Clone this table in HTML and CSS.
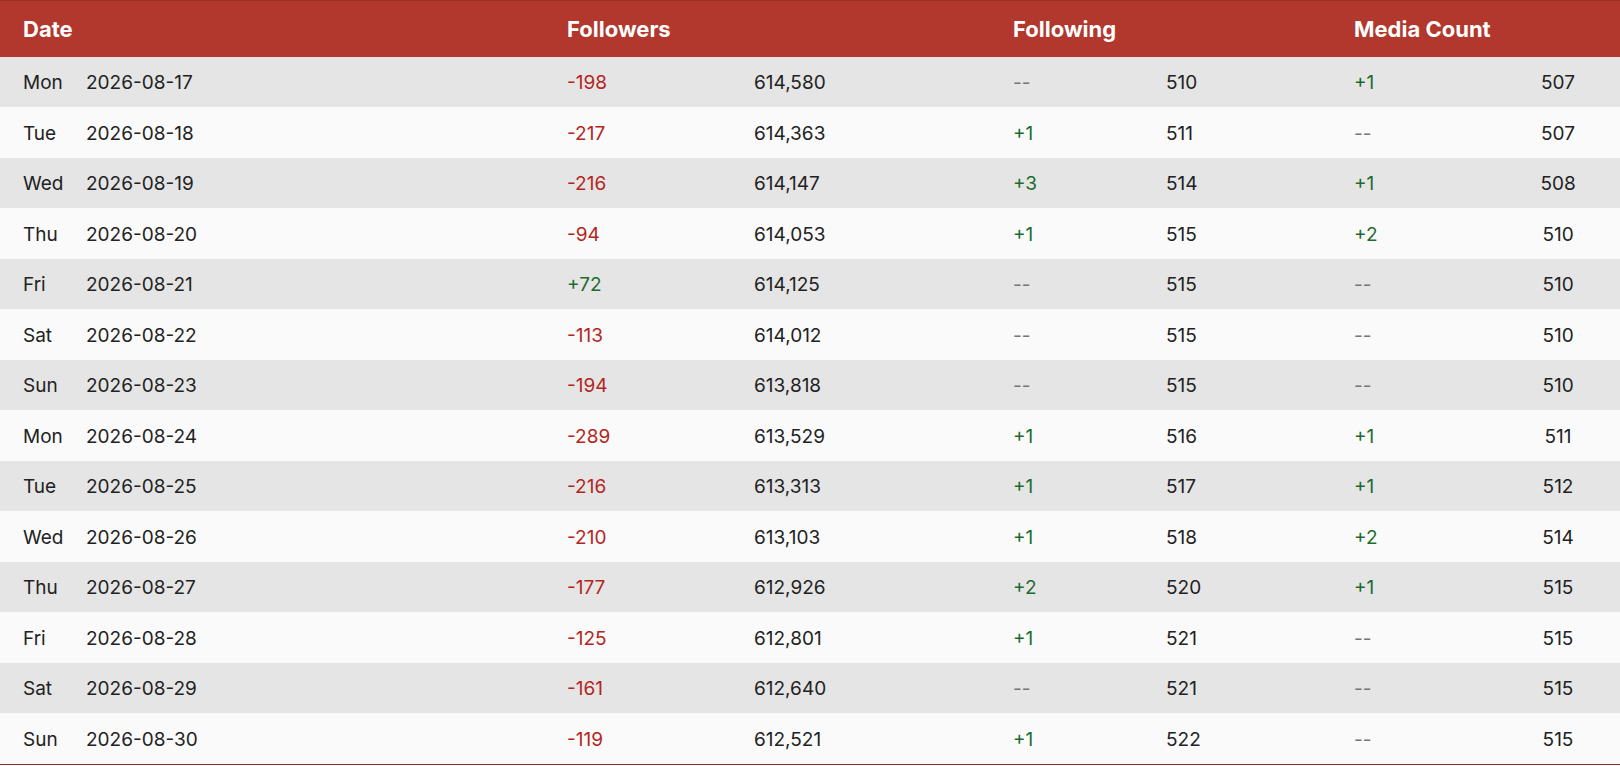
FILE: index.html
```html
<!DOCTYPE html>
<html lang="en">
<head>
<meta charset="utf-8">
<title>Account Stats</title>
<link rel="stylesheet" href="styles.css">
</head>
<body>
<table class="stats">
  <colgroup>
    <col class="c-day"><col class="c-date"><col class="c-fd"><col class="c-ft"><col class="c-gd"><col class="c-gt"><col class="c-md"><col class="c-mt">
  </colgroup>
  <thead>
    <tr>
      <th colspan="2">Date</th>
      <th colspan="2">Followers</th>
      <th colspan="2">Following</th>
      <th colspan="2">Media Count</th>
    </tr>
  </thead>
  <tbody>
    <tr><td>Mon</td><td>2026-08-17</td><td class="neg">-198</td><td>614,580</td><td class="nil">--</td><td>510</td><td class="pos">+1</td><td class="mt">507</td></tr>
    <tr><td>Tue</td><td>2026-08-18</td><td class="neg">-217</td><td>614,363</td><td class="pos">+1</td><td>511</td><td class="nil">--</td><td class="mt">507</td></tr>
    <tr><td>Wed</td><td>2026-08-19</td><td class="neg">-216</td><td>614,147</td><td class="pos">+3</td><td>514</td><td class="pos">+1</td><td class="mt">508</td></tr>
    <tr><td>Thu</td><td>2026-08-20</td><td class="neg">-94</td><td>614,053</td><td class="pos">+1</td><td>515</td><td class="pos">+2</td><td class="mt">510</td></tr>
    <tr><td>Fri</td><td>2026-08-21</td><td class="pos">+72</td><td>614,125</td><td class="nil">--</td><td>515</td><td class="nil">--</td><td class="mt">510</td></tr>
    <tr><td>Sat</td><td>2026-08-22</td><td class="neg">-113</td><td>614,012</td><td class="nil">--</td><td>515</td><td class="nil">--</td><td class="mt">510</td></tr>
    <tr><td>Sun</td><td>2026-08-23</td><td class="neg">-194</td><td>613,818</td><td class="nil">--</td><td>515</td><td class="nil">--</td><td class="mt">510</td></tr>
    <tr><td>Mon</td><td>2026-08-24</td><td class="neg">-289</td><td>613,529</td><td class="pos">+1</td><td>516</td><td class="pos">+1</td><td class="mt">511</td></tr>
    <tr><td>Tue</td><td>2026-08-25</td><td class="neg">-216</td><td>613,313</td><td class="pos">+1</td><td>517</td><td class="pos">+1</td><td class="mt">512</td></tr>
    <tr><td>Wed</td><td>2026-08-26</td><td class="neg">-210</td><td>613,103</td><td class="pos">+1</td><td>518</td><td class="pos">+2</td><td class="mt">514</td></tr>
    <tr><td>Thu</td><td>2026-08-27</td><td class="neg">-177</td><td>612,926</td><td class="pos">+2</td><td>520</td><td class="pos">+1</td><td class="mt">515</td></tr>
    <tr><td>Fri</td><td>2026-08-28</td><td class="neg">-125</td><td>612,801</td><td class="pos">+1</td><td>521</td><td class="nil">--</td><td class="mt">515</td></tr>
    <tr><td>Sat</td><td>2026-08-29</td><td class="neg">-161</td><td>612,640</td><td class="nil">--</td><td>521</td><td class="nil">--</td><td class="mt">515</td></tr>
    <tr><td>Sun</td><td>2026-08-30</td><td class="neg">-119</td><td>612,521</td><td class="pos">+1</td><td>522</td><td class="nil">--</td><td class="mt">515</td></tr>
  </tbody>
</table>
</body>
</html>
```
FILE: styles.css
```css
html, body {
  margin: 0;
  padding: 0;
  background: #ffffff;
}
body {
  font-family: Inter, "Noto Sans", "Liberation Sans", sans-serif;
  color: #222222;
}
.stats {
  width: 1620px;
  table-layout: fixed;
  border-collapse: collapse;
  border-top: 1px solid #9e2d24;
  border-bottom: 1px solid #8e2a24;
}
.c-day { width: 63px; }
.c-date { width: 481px; }
.c-fd { width: 187px; }
.c-ft { width: 259px; }
.c-gd { width: 153px; }
.c-gt { width: 188px; }
.c-md { width: 165px; }
.c-mt { width: 124px; }

.stats th {
  background: #b2372c;
  color: #ffffff;
  font-weight: 700;
  font-size: 22px;
  text-align: left;
  height: 56px;
  padding: 1px 0 0 23px;
  box-sizing: border-box;
  line-height: 26px;
}
.stats td {
  font-size: 19px;
  line-height: 20px;
  padding: 16.5px 0 14px 23px;
  text-align: left;
  white-space: nowrap;
}
.stats tbody tr:nth-child(odd) td { background: #e5e5e5; }
.stats tbody tr:nth-child(even) td { background: #fafafa; }
.stats td.neg { color: #b3261e; }
.stats td.pos { color: #1c6b2e; }
.stats td.nil { color: #777777; }
.stats td.mt { text-align: center; padding-right: 23px; }
```
